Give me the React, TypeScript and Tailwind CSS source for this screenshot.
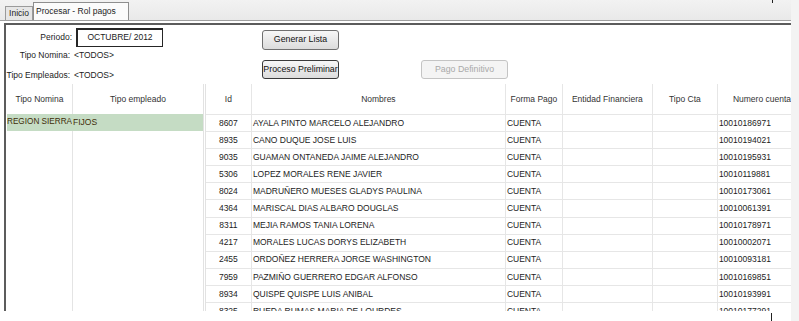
import React from "react";

const rows: [string, string, string][] = [
  ["8607", "AYALA PINTO MARCELO ALEJANDRO", "10010186971"],
  ["8935", "CANO DUQUE JOSE LUIS", "10010194021"],
  ["9035", "GUAMAN ONTANEDA JAIME ALEJANDRO", "10010195931"],
  ["5306", "LOPEZ MORALES RENE JAVIER", "10010119881"],
  ["8024", "MADRUÑERO MUESES GLADYS PAULINA", "10010173061"],
  ["4364", "MARISCAL DIAS ALBARO DOUGLAS", "10010061391"],
  ["8311", "MEJIA RAMOS TANIA LORENA", "10010178971"],
  ["4217", "MORALES LUCAS DORYS ELIZABETH", "10010002071"],
  ["2455", "ORDOÑEZ HERRERA JORGE WASHINGTON", "10010093181"],
  ["7959", "PAZMIÑO GUERRERO EDGAR ALFONSO", "10010169851"],
  ["8934", "QUISPE QUISPE LUIS ANIBAL", "10010193991"],
  ["8325", "RUEDA RUMAS MARIA DE LOURDES", "10010177291"],
];

const cols = "grid grid-cols-[45px_254px_57px_90px_65px_1fr]";

export default function App() {
  return (
    <div className="relative flex h-[321px] w-[799px] overflow-hidden bg-white font-['Liberation_Sans',Arial,sans-serif] text-[8.5px] text-[#1c1c1c]">
      <div className="flex w-[791px] flex-col">
        {/* Tabs */}
        <div className="flex h-[21px] shrink-0 items-end border-b border-[#a0a0a0] bg-linear-to-b from-[#f2f2f2] to-[#e9e9e9] pl-[5px]">
          <div className="flex h-[14px] w-[28px] items-center justify-center border border-b-0 border-[#9a9a9a] bg-[#e6e6e6]">
            Inicio
          </div>
          <div className="flex h-[18px] w-[96px] items-center border border-b-0 border-[#8e8e8e] bg-[#fbfbfb] pl-[2px]">
            Procesar - Rol pagos
          </div>
        </div>

        {/* Panel */}
        <div className="ml-[4px] mt-[2px] flex h-[288px] shrink-0 flex-col border-l-2 border-t-2 border-[#5c5c5c]">
          {/* Form */}
          <div className="flex h-[59px] shrink-0">
            <div className="flex w-[256px] flex-col pt-[3px]">
              <div className="flex h-[19px] items-center">
                <span className="w-[66px] text-right">Periodo:</span>
                <div className="ml-[4px] flex h-[19px] w-[87px] items-center justify-center border border-l-2 border-t-2 border-[#262626] bg-white pb-[2px]">
                  OCTUBRE/ 2012
                </div>
              </div>
              <div className="mt-[1px] flex h-[14px] items-center">
                <span className="w-[64px] text-right">Tipo Nomina:</span>
                <span className="ml-[4px]">&lt;TODOS&gt;</span>
              </div>
              <div className="mt-[6px] flex h-[14px] items-center">
                <span className="flex w-[64px] justify-end whitespace-nowrap">Tipo Empleados:</span>
                <span className="ml-[4px]">&lt;TODOS&gt;</span>
              </div>
            </div>
            <div className="flex w-[77px] flex-col pt-[5px] text-[8.8px]">
              <button className="flex h-[20px] items-center justify-center rounded-[3px] border border-[#707070] bg-linear-to-b from-[#f7f7f7] to-[#dcdcdc] text-[#111]">
                Generar Lista
              </button>
              <button className="mt-[10px] flex h-[19px] items-center justify-center rounded-[3px] border border-[#3a3a3a] bg-linear-to-b from-[#f7f7f7] to-[#dcdcdc] text-[#111]">
                Proceso Preliminar
              </button>
            </div>
            <div className="ml-[82px] flex w-[87px] flex-col pt-[35px] text-[8.8px]">
              <button className="flex h-[19px] items-center justify-center rounded-[3px] border border-[#c4c4c4] bg-[#f4f4f4] text-[#a9a9a9]">
                Pago Definitivo
              </button>
            </div>
          </div>

          {/* Tables */}
          <div className="flex h-[227px] shrink-0 overflow-hidden">
            <div className="ml-[1px] flex w-[198px] flex-col border-r border-[#e2e2e2]">
              <div className="grid h-[30px] shrink-0 grid-cols-[65px_1fr] text-[#333]">
                <div className="flex items-center justify-center">Tipo Nomina</div>
                <div className="flex items-center justify-center border-l border-[#e4e4e4]">Tipo empleado</div>
              </div>
              <div className="grid h-[17px] shrink-0 grid-cols-[65px_1fr] items-center bg-[#c5dcc4] text-[#3f2c08]">
                <div className="overflow-hidden whitespace-nowrap text-[8.2px]">REGION SIERRA</div>
                <div className="pl-[1px]">FIJOS</div>
              </div>
              <div className="grid flex-1 grid-cols-[65px_1fr]">
                <div />
                <div className="border-l border-[#e4e4e4]" />
              </div>
            </div>

            <div className="ml-[1px] flex flex-1 flex-col border-l border-[#e2e2e2]">
              <div className={`${cols} h-[30px] shrink-0 text-[#333]`}>
                <div className="flex items-center justify-center">Id</div>
                <div className="flex items-center justify-center border-l border-[#e6e6e6]">Nombres</div>
                <div className="flex items-center justify-center border-l border-[#e6e6e6]">Forma Pago</div>
                <div className="flex items-center justify-center border-l border-[#e6e6e6]">Entidad Financiera</div>
                <div className="flex items-center justify-center border-l border-[#e6e6e6]">Tipo Cta</div>
                <div className="flex items-center whitespace-nowrap border-l border-[#e6e6e6] pl-[15px]">Numero cuenta</div>
              </div>
              {rows.map(([id, name, cuenta]) => (
                <div key={id} className={`${cols} h-[17.1px] shrink-0 border-t border-[#e6e6e6]`}>
                  <div className="flex items-center justify-center">{id}</div>
                  <div className="flex items-center whitespace-nowrap border-l border-[#e6e6e6] pl-[1px]">{name}</div>
                  <div className="flex items-center border-l border-[#e6e6e6] pl-[1px]">CUENTA</div>
                  <div className="border-l border-[#e6e6e6]" />
                  <div className="border-l border-[#e6e6e6]" />
                  <div className="flex items-center border-l border-[#e6e6e6] pl-[1px]">{cuenta}</div>
                </div>
              ))}
            </div>
          </div>
        </div>

        {/* Bottom edge */}
        <div className="flex h-[10px] shrink-0 pl-[771px] pt-[2px]">
          <div className="w-px bg-[#222]" />
        </div>
      </div>
      <div className="flex-1 bg-[#f3f3f3]" />
      <div className="absolute left-[772px] top-0 h-[3px] w-px bg-[#222]" />
    </div>
  );
}
